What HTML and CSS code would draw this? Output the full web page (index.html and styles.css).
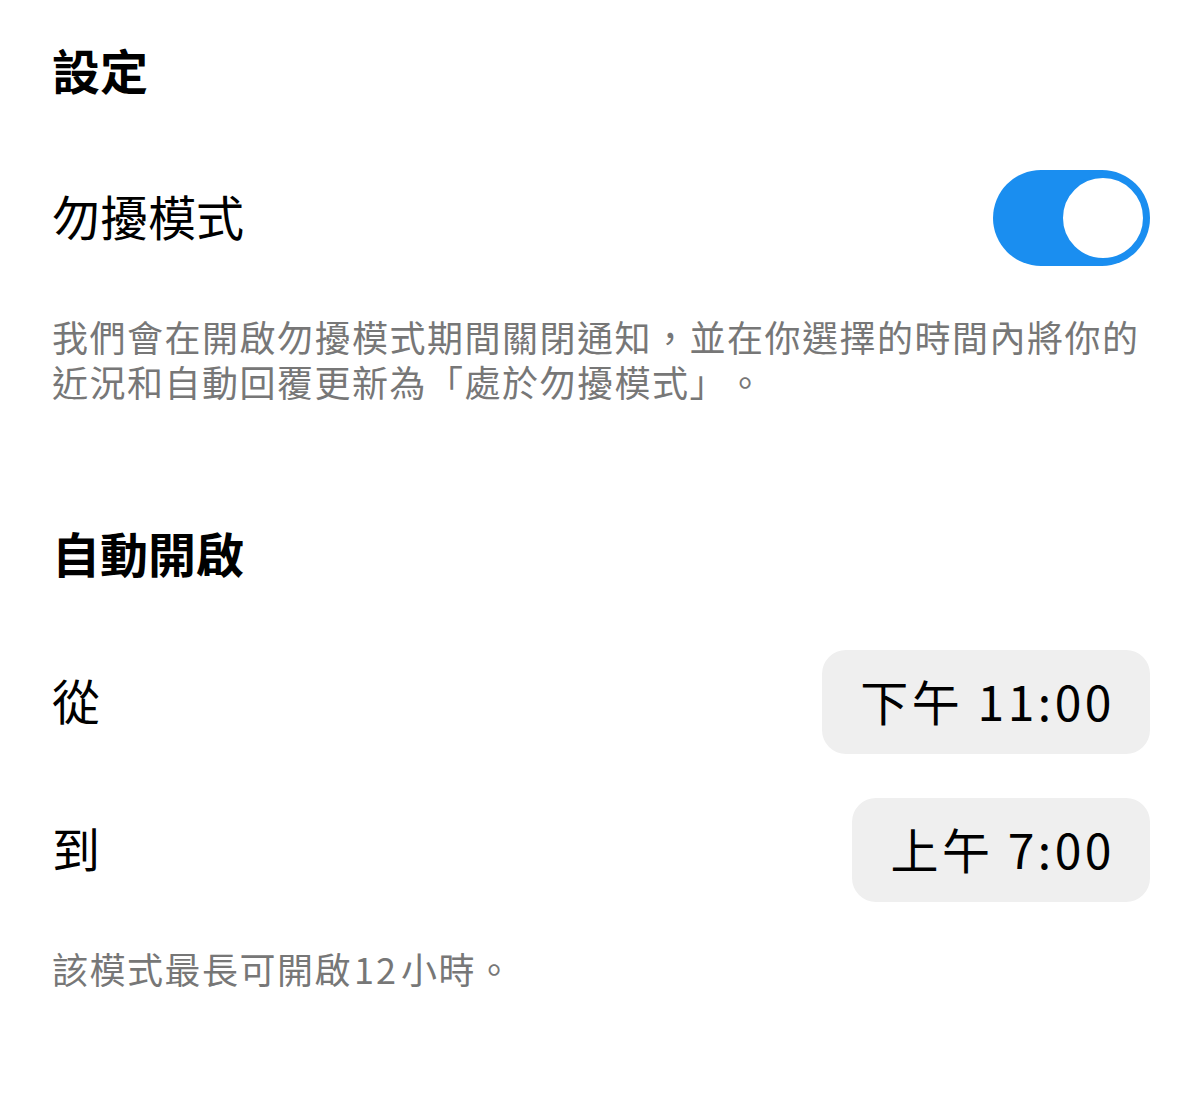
FILE: index.html
```html
<!DOCTYPE html>
<html lang="zh-Hant">
<head>
<meta charset="utf-8">
<title>設定</title>
<link rel="stylesheet" href="styles.css">
</head>
<body>
<main class="page">
  <h1 class="title">設定</h1>
  <div class="row toggle-row">
    <span class="label">勿擾模式</span>
    <span class="switch on"><span class="knob"></span></span>
  </div>
  <p class="desc">我們會在開啟勿擾模式期間關閉通知，並在你選擇的時間內將你的近況和自動回覆更新為「處於勿擾模式」。</p>
  <h2 class="section">自動開啟</h2>
  <div class="row time-row first">
    <span class="label">從</span>
    <span class="pill">下午 11:00</span>
  </div>
  <div class="row time-row">
    <span class="label">到</span>
    <span class="pill">上午 7:00</span>
  </div>
  <p class="note">該模式最長可開啟<span class="num">12</span>小時。</p>
</main>
</body>
</html>
```
FILE: styles.css
```css
html, body {
  margin: 0;
  padding: 0;
  background: #ffffff;
}
body {
  font-family: "Noto Sans CJK TC", "Noto Sans", sans-serif;
  color: #000000;
  text-spacing-trim: space-all;
}
.page {
  padding: 39px 50px 0 52px;
}
.title {
  margin: 0;
  font-size: 48px;
  font-weight: 700;
  line-height: 60px;
}
.row {
  display: flex;
  align-items: center;
  justify-content: space-between;
}
.toggle-row {
  margin-top: 71px;
  height: 96px;
}
.label {
  font-size: 48px;
  line-height: 60px;
  padding-bottom: 7px;
}
.switch {
  width: 157px;
  height: 96px;
  border-radius: 48px;
  background: #1a8ef0;
  display: flex;
  align-items: center;
  justify-content: flex-end;
  padding: 0 4px;
  box-sizing: border-box;
}
.knob {
  width: 86px;
  height: 86px;
  border-radius: 50%;
  background: #ffffff;
  border: 3px solid #1a8ef0;
  box-sizing: border-box;
}
.desc {
  margin: 48px 0 0;
  font-size: 36px;
  letter-spacing: 1.5px;
  line-height: 45px;
  color: #777777;
}
.section {
  margin: 118px 0 0;
  font-size: 48px;
  font-weight: 700;
  line-height: 60px;
}
.time-row.first {
  margin-top: 68px;
}
.time-row {
  margin-top: 44px;
}
.pill {
  background: #efefef;
  border-radius: 24px;
  height: 104px;
  padding: 0 35px 4px 38px;
  box-sizing: border-box;
  display: flex;
  align-items: center;
  font-size: 48px;
  letter-spacing: 3.5px;
}
.note {
  margin: 44px 0 0;
  font-size: 36px;
  letter-spacing: 1.5px;
  line-height: 45px;
  color: #777777;
}
.num {
  margin: 0 3px 0 2px;
  letter-spacing: 2px;
}
```
